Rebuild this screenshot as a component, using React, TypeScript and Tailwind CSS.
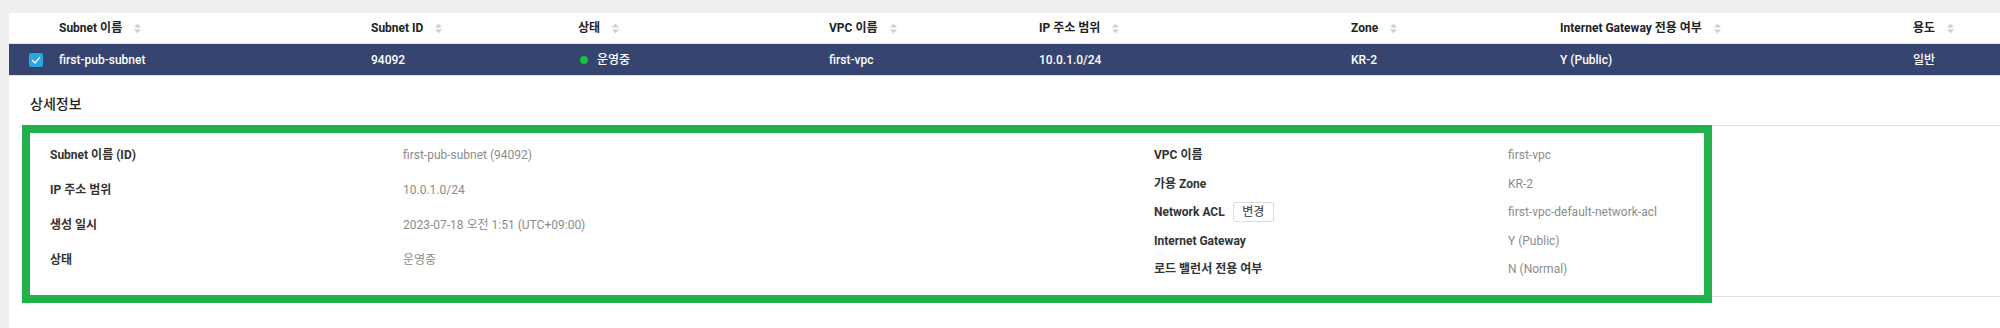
import React from 'react';

const cols = 'grid grid-cols-[50px_312px_207px_251px_210px_312px_209px_353px_1fr]';

const SortIcon = () => (
  <svg width="7" height="11" viewBox="0 0 7 11" className="ml-3 shrink-0">
    <polygon points="0,4.5 3.5,0.5 7,4.5" fill="#d0d0d0" />
    <polygon points="0,6.5 3.5,10.5 7,6.5" fill="#d0d0d0" />
  </svg>
);

const headers = ['Subnet 이름', 'Subnet ID', '상태', 'VPC 이름', 'IP 주소 범위', 'Zone', 'Internet Gateway 전용 여부', '용도'];

const leftRows: [string, string][] = [
  ['Subnet 이름 (ID)', 'first-pub-subnet (94092)'],
  ['IP 주소 범위', '10.0.1.0/24'],
  ['생성 일시', '2023-07-18 오전 1:51 (UTC+09:00)'],
  ['상태', '운영중'],
];

const rightRows: [string, string][] = [
  ['VPC 이름', 'first-vpc'],
  ['가용 Zone', 'KR-2'],
  ['Network ACL', 'first-vpc-default-network-acl'],
  ['Internet Gateway', 'Y (Public)'],
  ['로드 밸런서 전용 여부', 'N (Normal)'],
];

export default function App() {
  return (
    <div
      className="relative w-[2000px] h-[328px] overflow-hidden bg-[#efefef] pt-[13px] pl-[9px]"
      style={{ fontFamily: 'Roboto, "Noto Sans CJK KR", sans-serif' }}
    >
      <div className="bg-white h-full text-[12px]">
        {/* list header */}
        <div className={`${cols} h-[31px] items-center border-b border-[#e3e3e3] text-[#222] font-bold`}>
          <div />
          {headers.map((h) => (
            <div key={h} className="flex items-center">
              <span>{h}</span>
              <SortIcon />
            </div>
          ))}
        </div>

        {/* selected row */}
        <div className={`${cols} h-[32px] items-center bg-[#364470] border-b border-[#dfe2ea] text-white font-medium`}>
          <div className="pl-[20px] flex items-center">
            <span className="w-[14px] h-[14px] rounded-[2px] bg-[#29a8e0] flex items-center justify-center">
              <svg width="10" height="8" viewBox="0 0 10 8">
                <polyline points="1,4 4,7 9,1" fill="none" stroke="white" strokeWidth="1.2" />
              </svg>
            </span>
          </div>
          <div>first-pub-subnet</div>
          <div>94092</div>
          <div className="flex items-center">
            <span className="w-[8px] h-[8px] rounded-full bg-[#16c33a] ml-[2px] mr-[9px]" />
            <span>운영중</span>
          </div>
          <div>first-vpc</div>
          <div>10.0.1.0/24</div>
          <div>KR-2</div>
          <div>Y (Public)</div>
          <div>일반</div>
        </div>

        {/* detail section */}
        <div className="pl-[13px]">
          <div className="pt-[18px] pb-[11px] pl-[8px] text-[14px] leading-[20px] font-medium text-[#222]">상세정보</div>
          <div className="flex border-y border-[#e2e2e2] h-[172px]">
            <div className="w-[1132px] pl-[28px] pt-[11px]">
              {leftRows.map(([k, v]) => (
                <div key={k} className="grid grid-cols-[353px_1fr] h-[35px] items-center">
                  <span className="font-bold text-[#333]">{k}</span>
                  <span className="text-[#8c8c8c]">{v}</span>
                </div>
              ))}
            </div>
            <div className="flex-1 pt-[15px]">
              {rightRows.map(([k, v]) => (
                <div key={k} className="grid grid-cols-[354px_1fr] h-[28.5px] items-center">
                  <span className="flex items-center font-bold text-[#333]">
                    {k}
                    {k === 'Network ACL' && (
                      <span className="ml-[8px] h-[20px] w-[41px] border border-[#dddddd] rounded-[2px] flex items-center justify-center font-normal text-[#333]">
                        변경
                      </span>
                    )}
                  </span>
                  <span className="text-[#8c8c8c]">{v}</span>
                </div>
              ))}
            </div>
          </div>
        </div>
      </div>

      {/* annotation frame */}
      <div className="absolute left-[22px] top-[125px] w-[1690px] h-[178px] border-[8px] border-[#22b14c] pointer-events-none" />
    </div>
  );
}
